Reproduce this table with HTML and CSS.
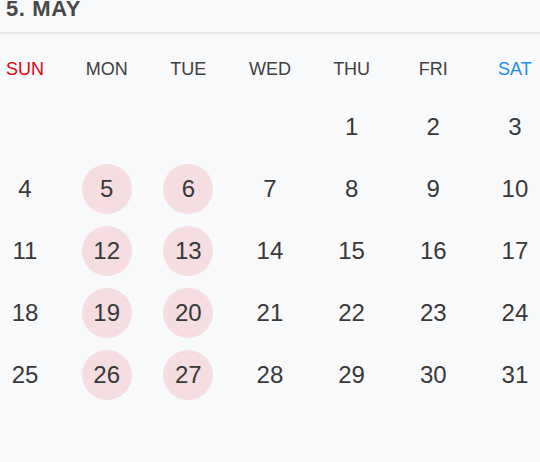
FILE: index.html
```html
<!DOCTYPE html>
<html lang="en">
<head>
<meta charset="utf-8">
<title>May</title>
<link rel="stylesheet" href="styles.css">
</head>
<body>
<div class="calendar">
  <div class="month-header">5. MAY</div>
  <div class="weekdays">
    <div class="wd sun">SUN</div>
    <div class="wd">MON</div>
    <div class="wd">TUE</div>
    <div class="wd">WED</div>
    <div class="wd">THU</div>
    <div class="wd">FRI</div>
    <div class="wd sat">SAT</div>
  </div>
  <div class="days">
    <div class="day"></div><div class="day"></div><div class="day"></div><div class="day"></div>
    <div class="day">1</div><div class="day">2</div><div class="day">3</div>
    <div class="day">4</div><div class="day mark">5</div><div class="day mark">6</div><div class="day">7</div><div class="day">8</div><div class="day">9</div><div class="day">10</div>
    <div class="day">11</div><div class="day mark">12</div><div class="day mark">13</div><div class="day">14</div><div class="day">15</div><div class="day">16</div><div class="day">17</div>
    <div class="day">18</div><div class="day mark">19</div><div class="day mark">20</div><div class="day">21</div><div class="day">22</div><div class="day">23</div><div class="day">24</div>
    <div class="day">25</div><div class="day mark">26</div><div class="day mark">27</div><div class="day">28</div><div class="day">29</div><div class="day">30</div><div class="day">31</div>
  </div>
</div>
</body>
</html>
```
FILE: styles.css
```css
html, body {
  margin: 0;
  padding: 0;
  background: #f8f9fb;
}
body {
  font-family: "Liberation Sans", Arial, sans-serif;
  color: #3a3a3a;
  width: 540px;
  height: 462px;
  overflow: hidden;
}
.calendar {
  display: flex;
  flex-direction: column;
}
.month-header {
  font-size: 22px;
  font-weight: bold;
  letter-spacing: 0.6px;
  line-height: 18px;
  padding: 0 0 14px 6px;
  color: #484848;
  border-bottom: 2px solid #e6e7e9;
}
.weekdays {
  display: grid;
  grid-template-columns: repeat(7, 50px);
  justify-content: space-between;
  margin-top: 24px;
}
.wd {
  text-align: center;
  font-size: 18px;
  line-height: 22px;
  white-space: nowrap;
  color: #404040;
}
.wd.sun { color: #e8000e; }
.wd.sat { color: #1e8cef; }
.days {
  display: grid;
  grid-template-columns: repeat(7, 50px);
  grid-auto-rows: 50px;
  row-gap: 12px;
  justify-content: space-between;
  margin-top: 22px;
}
.day {
  text-align: center;
  font-size: 24px;
  line-height: 50px;
  border-radius: 50%;
  color: #383838;
}
.day.mark {
  background: #f6dde1;
}
```
